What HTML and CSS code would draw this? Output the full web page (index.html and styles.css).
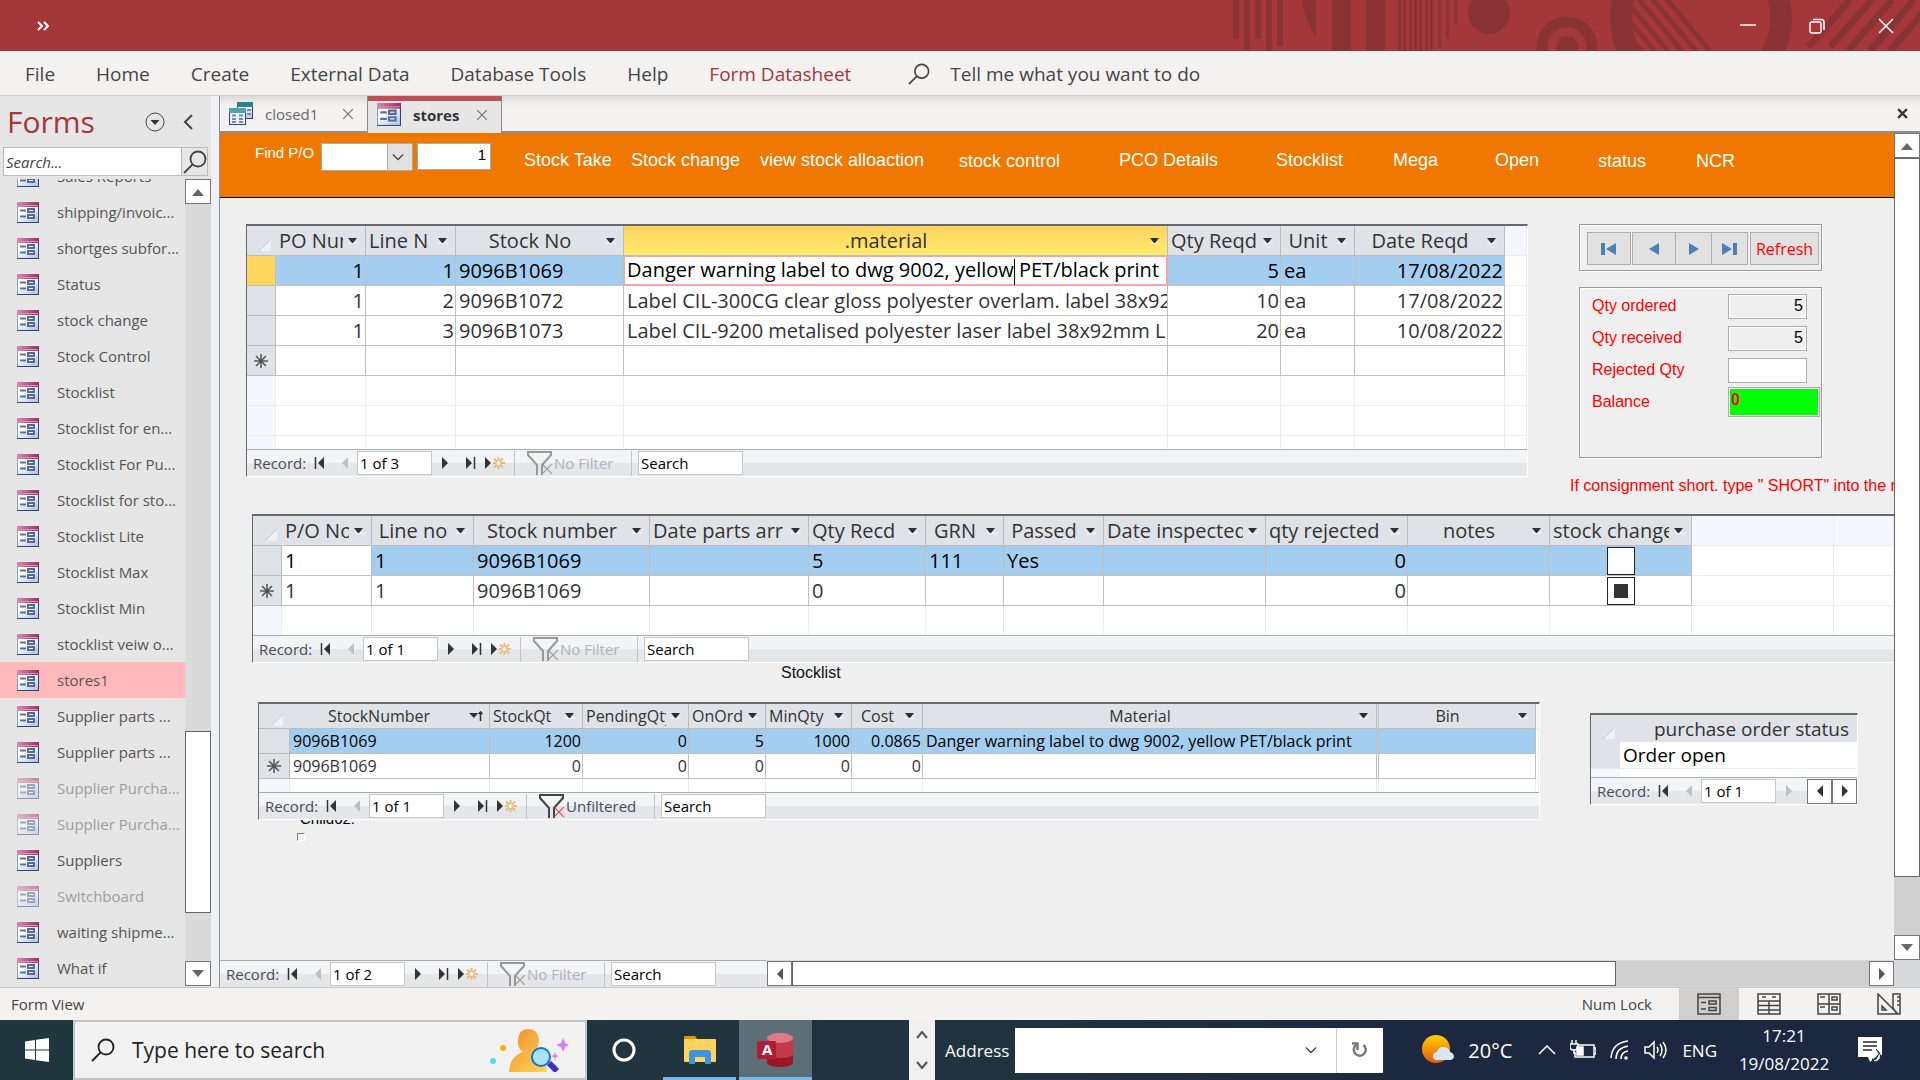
FILE: index.html
```html
<!DOCTYPE html>
<html lang="en">
<head>
    <meta charset="UTF-8">
    <title>stores</title>
    <link rel="stylesheet" href="styles.css">
</head>
<body>
    <!-- shared icons -->
    <svg class="sprite" aria-hidden="true">
        <defs>
            <linearGradient id="pink" x1="0" x2="1"><stop offset="0" stop-color="#d58bab"/><stop offset="1" stop-color="#9c2a60"/></linearGradient>
            <linearGradient id="sheet" x1="0" x2="1" y2="1"><stop offset="0.3" stop-color="#fff"/><stop offset="1" stop-color="#a9c0e6"/></linearGradient>
            <linearGradient id="amber" x1="0" x2="0" y2="1"><stop offset="0" stop-color="#ffd000"/><stop offset="1" stop-color="#e8590c"/></linearGradient>
            <linearGradient id="person" x1="0" x2="1" y2="1"><stop offset="0" stop-color="#f08c2a"/><stop offset="1" stop-color="#ffd75a"/></linearGradient>
        </defs>
        <symbol id="i-form" viewBox="0 0 22 21">
            <rect width="22" height="21" fill="#31456f"/>
            <rect width="21" height="20" fill="#8fa0bd"/>
            <rect x="1" y="5" width="20" height="15" fill="url(#sheet)"/>
            <rect width="22" height="5" fill="url(#pink)"/>
            <path d="M1 3.500h20" stroke="#d98fb0"/>
            <path d="M3 8.500h6M3 14.500h6" stroke="#5a6f9c" stroke-width="2"/>
            <path d="M11 7h6v3h-6zM11 13h6v3h-6z" fill="#fff" stroke="#566994" stroke-width="2"/>
        </symbol>
        <symbol id="i-query" viewBox="0 0 24 23">
            <rect x="8" y="0" width="16" height="17" fill="#31456f"/>
            <rect x="9" y="5" width="14" height="11" fill="url(#sheet)"/>
            <rect x="8" width="16" height="5" fill="#2c8088"/>
            <rect y="6" width="17" height="17" fill="#31456f"/>
            <rect x="1" y="11" width="15" height="11" fill="#eef3fb"/>
            <rect y="6" width="17" height="5" fill="#4da5ab"/>
            <path d="M3 13.500h4M3 17h4M3 20h4M10 13.500h4M10 17h4M10 20h4M18 8h4M18 12h4" stroke="#7288b5" stroke-width="2"/>
        </symbol>
        <symbol id="i-first" viewBox="0 0 14 14"><path d="M2.500 1v12" stroke="#333" stroke-width="1.500"/><path d="M11 1v12L5 7z" fill="#333"/></symbol>
        <symbol id="i-prev" viewBox="0 0 14 14"><path d="M10 1v12L4 7z"/></symbol>
        <symbol id="i-next" viewBox="0 0 14 14"><path d="M4 1v12l6-6z"/></symbol>
        <symbol id="i-last" viewBox="0 0 14 14"><path d="M11.500 1v12" stroke="#333" stroke-width="1.500"/><path d="M3 1v12l6-6z" fill="#333"/></symbol>
        <symbol id="i-new" viewBox="0 0 20 14"><path d="M0 1v12l6-6z" fill="#333"/><path d="M13.500 1v12M8 7h12M9 2.500l9 9M18 2.500l-9 9" stroke="#e8bd78" stroke-width="2"/><circle cx="13.500" cy="7" r="2" fill="#f6f6f8"/></symbol>
        <symbol id="i-filter" viewBox="0 0 26 24"><path d="M15 24V14L24 4V1H1v3l9 10v10" fill="none" stroke="currentColor" stroke-width="2"/></symbol>
        <symbol id="i-cross" viewBox="0 0 10 10"><path d="M1 1l8 8M9 1L1 9" stroke="currentColor" fill="none"/></symbol>
        <symbol id="i-drop" viewBox="0 0 12 8"><path d="M1 6h10" stroke="#fff"/><path d="M1 1h9L6 6H5z" fill="#29303a"/></symbol>
        <symbol id="i-corner" viewBox="0 0 12 12"><path d="M12 0v12H0z" fill="#edf1f6"/><path d="M12 0L0 12" stroke="#b9cbe0"/></symbol>
        <symbol id="i-star" viewBox="0 0 16 16"><path d="M8 1v14M1 8h14M3 3l10 10M13 3L3 13" stroke="#555" stroke-width="1.500"/></symbol>
        <symbol id="i-chev" viewBox="0 0 14 8"><path d="M1 1l6 6 6-6" fill="none" stroke="currentColor" stroke-width="1.500"/></symbol>
        <symbol id="i-glass" viewBox="0 0 24 24"><circle cx="15" cy="9" r="7.500" fill="none" stroke="currentColor" stroke-width="1.800"/><path d="M9.500 14.500L1 23" stroke="currentColor" stroke-width="1.800"/></symbol>
        <symbol id="i-up" viewBox="0 0 12 8"><path d="M0 8l6-7 6 7z"/></symbol>
        <symbol id="i-down" viewBox="0 0 12 8"><path d="M0 0l6 7 6-7z"/></symbol>
    </svg>

    <header class="titlebar">
        <svg class="titlebar-art" width="687" height="51" viewBox="1233 0 687 51">
            <g fill="#8a3335">
                <path d="M1233 0h6v39h-6zM1244 0h6v50h-6zM1255 0h6v39h-6zM1266 0h6v51h-6zM1277 0h6v46h-6z"/>
                <path d="M1302 0h14v37q-12-17-14-37zM1332 0h19v51h-19zM1366 0h19v51h-19z"/>
                <path d="M1398 0h3v51h-3zM1403 0h3v51h-3zM1409 0h3v51h-3zM1414 0h3v51h-3zM1419 0h3v51h-3zM1425 0h3v51h-3zM1430 0h3v51h-3zM1438 0h3v48h-3zM1446 0h3v38h-3zM1454 0h3v24h-3z"/>
                <circle cx="1489" cy="13" r="21"/>
                <circle cx="1567" cy="47" r="11"/>
            </g>
            <g fill="none" stroke="#8a3335">
                <circle cx="1567" cy="47" r="25" stroke-width="11"/>
                <circle cx="1701" cy="17" r="80" stroke-width="22"/>
                <path d="M1632 8l36 43M1632 24l23 27M1632 40l10 11M1636-4l46 55M1650-4l46 55M1664-4l46 55" stroke-width="5"/>
                <path d="M1808 47l42-47M1830 47l42-47M1848 51l44-51M1870 51l44-51M1890 51l44-51" stroke-width="7"/>
            </g>
        </svg>
        <button class="more" aria-label="More commands"><svg width="12" height="10" viewBox="0 0 12 10"><path d="M1 1l4 4-4 4M7 1l4 4-4 4" fill="none" stroke="#fff" stroke-width="2"/></svg></button>
        <div class="window-buttons">
            <button aria-label="Minimise"><svg width="16" height="16" viewBox="0 0 16 16"><path d="M0 7h16" stroke="#fff" stroke-width="1.500"/></svg></button>
            <button aria-label="Restore"><svg width="16" height="16" viewBox="0 0 16 16"><rect x="1" y="4" width="11" height="11" rx="2" fill="none" stroke="#fff" stroke-width="1.500"/><path d="M4 1.500h8q3 0 3 3V12" fill="none" stroke="#fff" stroke-width="1.500"/></svg></button>
            <button aria-label="Close"><svg width="16" height="16" viewBox="0 0 16 16"><path d="M1 1l14 14M15 1L1 15" stroke="#fff" stroke-width="1.500"/></svg></button>
        </div>
    </header>

    <nav class="ribbon">
        <a href="#">File</a>
        <a href="#">Home</a>
        <a href="#">Create</a>
        <a href="#">External Data</a>
        <a href="#">Database Tools</a>
        <a href="#">Help</a>
        <a href="#" class="current">Form Datasheet</a>
        <label class="tell-me">
            <svg width="22" height="22"><use href="#i-glass"/></svg>
            <input type="text" placeholder="Tell me what you want to do">
        </label>
    </nav>

    <div class="workspace">
        <aside class="nav-pane">
            <div class="nav-head">
                <h1>Forms</h1>
                <button aria-label="Choose group"><svg width="20" height="20" viewBox="0 0 20 20"><circle cx="10" cy="10" r="9" fill="none" stroke="#444"/><path d="M5.500 8h9L10 13z" fill="#333"/></svg></button>
                <button aria-label="Collapse pane"><svg width="10" height="16" viewBox="0 0 10 16"><path d="M9 1L2 8l7 7" fill="none" stroke="#444" stroke-width="2"/></svg></button>
            </div>
            <div class="nav-search">
                <input type="text" placeholder="Search..." aria-label="Search forms">
                <button aria-label="Search"><svg width="24" height="24"><use href="#i-glass"/></svg></button>
            </div>
            <div class="nav-body">
                <ul>
                    <li><a href="#"><svg><use href="#i-form"/></svg><span>Sales Reports</span></a></li>
                    <li><a href="#"><svg><use href="#i-form"/></svg><span>shipping/invoic...</span></a></li>
                    <li><a href="#"><svg><use href="#i-form"/></svg><span>shortges subfor...</span></a></li>
                    <li><a href="#"><svg><use href="#i-form"/></svg><span>Status</span></a></li>
                    <li><a href="#"><svg><use href="#i-form"/></svg><span>stock change</span></a></li>
                    <li><a href="#"><svg><use href="#i-form"/></svg><span>Stock Control</span></a></li>
                    <li><a href="#"><svg><use href="#i-form"/></svg><span>Stocklist</span></a></li>
                    <li><a href="#"><svg><use href="#i-form"/></svg><span>Stocklist for en...</span></a></li>
                    <li><a href="#"><svg><use href="#i-form"/></svg><span>Stocklist For Pu...</span></a></li>
                    <li><a href="#"><svg><use href="#i-form"/></svg><span>Stocklist for sto...</span></a></li>
                    <li><a href="#"><svg><use href="#i-form"/></svg><span>Stocklist Lite</span></a></li>
                    <li><a href="#"><svg><use href="#i-form"/></svg><span>Stocklist Max</span></a></li>
                    <li><a href="#"><svg><use href="#i-form"/></svg><span>Stocklist Min</span></a></li>
                    <li><a href="#"><svg><use href="#i-form"/></svg><span>stocklist veiw o...</span></a></li>
                    <li class="selected"><a href="#"><svg><use href="#i-form"/></svg><span>stores1</span></a></li>
                    <li><a href="#"><svg><use href="#i-form"/></svg><span>Supplier parts ...</span></a></li>
                    <li><a href="#"><svg><use href="#i-form"/></svg><span>Supplier parts ...</span></a></li>
                    <li class="dim"><a href="#"><svg><use href="#i-form"/></svg><span>Supplier Purcha...</span></a></li>
                    <li class="dim"><a href="#"><svg><use href="#i-form"/></svg><span>Supplier Purcha...</span></a></li>
                    <li><a href="#"><svg><use href="#i-form"/></svg><span>Suppliers</span></a></li>
                    <li class="dim"><a href="#"><svg><use href="#i-form"/></svg><span>Switchboard</span></a></li>
                    <li><a href="#"><svg><use href="#i-form"/></svg><span>waiting shipme...</span></a></li>
                    <li><a href="#"><svg><use href="#i-form"/></svg><span>What if</span></a></li>
                </ul>
                <div class="vscroll">
                    <button aria-label="Scroll up"><svg width="12" height="8"><use href="#i-up"/></svg></button>
                    <div class="track-before"></div>
                    <div class="thumb"></div>
                    <div class="track-after"></div>
                    <button aria-label="Scroll down"><svg width="12" height="8"><use href="#i-down"/></svg></button>
                </div>
            </div>
        </aside>

        <main class="document">
            <div class="tabs">
                <div class="tab"><svg width="24" height="23"><use href="#i-query"/></svg><a href="#">closed1</a><button aria-label="Close closed1"><svg width="12" height="12"><use href="#i-cross"/></svg></button></div>
                <div class="tab active"><svg width="24" height="23"><use href="#i-form"/></svg><a href="#">stores</a><button aria-label="Close stores"><svg width="12" height="12"><use href="#i-cross"/></svg></button></div>
                <button class="close-all" aria-label="Close form"><svg width="11" height="11" viewBox="0 0 10 10"><path d="M1 1l8 8M9 1L1 9" stroke="#333" stroke-width="2"/></svg></button>
            </div>

            <div class="form-area">
                <div class="form-view">
                    <div class="form-header">
                        <label class="find-label" for="find-po">Find P/O</label>
                        <div class="combo">
                            <select id="find-po"><option></option></select>
                            <svg width="12" height="8"><use href="#i-chev"/></svg>
                        </div>
                        <input class="po-value" type="text" value="1" aria-label="P/O number">
                        <div class="form-links">
                            <button>Stock Take</button>
                            <button>Stock change</button>
                            <button>view stock alloaction</button>
                            <button class="low">stock control</button>
                            <button>PCO Details</button>
                            <button>Stocklist</button>
                            <button>Mega</button>
                            <button>Open</button>
                            <button class="low">status</button>
                            <button class="low">NCR</button>
                        </div>
                    </div>

                    <div class="form-body">
                        <section class="row row-lines">
                            <div class="subform">
                                <table class="sheet lines">
                                    <colgroup><col class="w28"><col class="w90"><col class="w90"><col class="w168"><col><col class="w113"><col class="w74"><col class="w150"><col class="w22"></colgroup>
                                    <thead>
                                        <tr>
                                            <th><svg class="corner"><use href="#i-corner"/></svg></th>
                                            <th><div><span class="clip">PO Num</span><svg><use href="#i-drop"/></svg></div></th>
                                            <th><div><span class="clip">Line N</span><svg><use href="#i-drop"/></svg></div></th>
                                            <th><div><span>Stock No</span><svg><use href="#i-drop"/></svg></div></th>
                                            <th class="hot"><div><span>.material</span><svg><use href="#i-drop"/></svg></div></th>
                                            <th><div><span class="clip">Qty Reqd</span><svg><use href="#i-drop"/></svg></div></th>
                                            <th><div><span>Unit</span><svg><use href="#i-drop"/></svg></div></th>
                                            <th><div><span>Date Reqd</span><svg><use href="#i-drop"/></svg></div></th>
                                            <td class="void"></td>
                                        </tr>
                                    </thead>
                                    <tbody>
                                        <tr class="picked"><th class="hot-row"></th><td class="num">1</td><td class="num">1</td><td>9096B1069</td><td class="editing">Danger warning label to dwg 9002, yellow<i class="caret"></i> PET/black print</td><td class="num">5</td><td>ea</td><td class="num">17/08/2022</td><td class="void"></td></tr>
                                        <tr><th></th><td class="num">1</td><td class="num">2</td><td>9096B1072</td><td>Label CIL-300CG clear gloss polyester overlam. label 38x92mm</td><td class="num">10</td><td>ea</td><td class="num">17/08/2022</td><td class="void"></td></tr>
                                        <tr><th></th><td class="num">1</td><td class="num">3</td><td>9096B1073</td><td>Label CIL-9200 metalised polyester laser label 38x92mm L</td><td class="num">20</td><td>ea</td><td class="num">10/08/2022</td><td class="void"></td></tr>
                                        <tr><th><svg class="star"><use href="#i-star"/></svg></th><td></td><td></td><td></td><td></td><td></td><td></td><td></td><td class="void"></td></tr>
                                        <tr class="blank"><td></td><td></td><td></td><td></td><td></td><td></td><td></td><td></td><td></td></tr>
                                        <tr class="blank"><td></td><td></td><td></td><td></td><td></td><td></td><td></td><td></td><td></td></tr>
                                        <tr class="blank part"><td></td><td></td><td></td><td></td><td></td><td></td><td></td><td></td><td></td></tr>
                                    </tbody>
                                </table>
                                <div class="recnav">
                                    <span>Record:</span>
                                    <button aria-label="First"><svg><use href="#i-first"/></svg></button>
                                    <button aria-label="Previous" disabled><svg><use href="#i-prev"/></svg></button>
                                    <input class="position" type="text" value="1 of 3" aria-label="Current record">
                                    <button aria-label="Next"><svg><use href="#i-next"/></svg></button>
                                    <button aria-label="Last"><svg><use href="#i-last"/></svg></button>
                                    <button class="new" aria-label="New record"><svg><use href="#i-new"/></svg></button>
                                    <button class="filter" disabled><svg><use href="#i-filter"/></svg><svg class="x"><use href="#i-cross"/></svg>No Filter</button>
                                    <input class="find" type="text" value="Search" aria-label="Search records">
                                </div>
                            </div>

                            <div class="side">
                                <div class="box movers">
                                    <button aria-label="First order"><svg width="16" height="14" viewBox="0 0 16 14"><path d="M0 1h4v12H0zM15 1v12L5 7z"/></svg></button>
                                    <button aria-label="Previous order"><svg width="16" height="14" viewBox="0 0 16 14"><path d="M13 1v12L3 7z"/></svg></button>
                                    <button class="joined" aria-label="Next order"><svg width="16" height="14" viewBox="0 0 16 14"><path d="M3 1v12l10-6z"/></svg></button>
                                    <button class="joined" aria-label="Last order"><svg width="16" height="14" viewBox="0 0 16 14"><path d="M15 1h-4v12h4zM0 1v12l10-6z"/></svg></button>
                                    <button class="refresh">Refresh</button>
                                </div>
                                <div class="box totals">
                                    <label for="ordered">Qty ordered</label><input id="ordered" type="text" value="5" readonly>
                                    <label for="received">Qty received</label><input id="received" type="text" value="5" readonly>
                                    <label for="rejected">Rejected Qty</label><input id="rejected" class="open" type="text">
                                    <label for="balance">Balance</label><input id="balance" class="balance" type="text" value="0">
                                </div>
                                <p class="hint">If consignment short. type " SHORT" into the rejected box</p>
                            </div>
                        </section>

                        <section class="row row-receipts">
                            <div class="subform cut">
                                <table class="sheet">
                                    <colgroup><col class="w28"><col class="w90"><col class="w102"><col class="w176"><col class="w159"><col class="w117"><col class="w78"><col class="w100"><col class="w162"><col class="w142"><col class="w142"><col class="w142"><col class="w142"><col></colgroup>
                                    <thead>
                                        <tr>
                                            <th><svg class="corner"><use href="#i-corner"/></svg></th>
                                            <th><div><span class="clip">P/O No</span><svg><use href="#i-drop"/></svg></div></th>
                                            <th><div><span>Line no</span><svg><use href="#i-drop"/></svg></div></th>
                                            <th><div><span>Stock number</span><svg><use href="#i-drop"/></svg></div></th>
                                            <th><div><span class="clip">Date parts arr</span><svg><use href="#i-drop"/></svg></div></th>
                                            <th><div><span class="clip">Qty Recd</span><svg><use href="#i-drop"/></svg></div></th>
                                            <th><div><span>GRN</span><svg><use href="#i-drop"/></svg></div></th>
                                            <th><div><span>Passed</span><svg><use href="#i-drop"/></svg></div></th>
                                            <th><div><span class="clip">Date inspected</span><svg><use href="#i-drop"/></svg></div></th>
                                            <th><div><span class="clip">qty rejected</span><svg><use href="#i-drop"/></svg></div></th>
                                            <th><div><span>notes</span><svg><use href="#i-drop"/></svg></div></th>
                                            <th><div><span class="clip">stock change</span><svg><use href="#i-drop"/></svg></div></th>
                                            <td class="void"></td><td class="void"></td>
                                        </tr>
                                    </thead>
                                    <tbody>
                                        <tr class="picked"><th></th><td class="plain">1</td><td>1</td><td>9096B1069</td><td></td><td>5</td><td>111</td><td>Yes</td><td></td><td class="num">0</td><td></td><td class="mid"><input type="checkbox" aria-label="Stock changed"></td><td class="void"></td><td class="void"></td></tr>
                                        <tr><th><svg class="star"><use href="#i-star"/></svg></th><td>1</td><td>1</td><td>9096B1069</td><td></td><td>0</td><td></td><td></td><td></td><td class="num">0</td><td></td><td class="mid"><input type="checkbox" checked aria-label="Stock changed, new record"></td><td class="void"></td><td class="void"></td></tr>
                                        <tr class="blank last"><td></td><td></td><td></td><td></td><td></td><td></td><td></td><td></td><td></td><td></td><td></td><td></td><td></td><td></td></tr>
                                    </tbody>
                                </table>
                                <div class="recnav">
                                    <span>Record:</span>
                                    <button aria-label="First"><svg><use href="#i-first"/></svg></button>
                                    <button aria-label="Previous" disabled><svg><use href="#i-prev"/></svg></button>
                                    <input class="position" type="text" value="1 of 1" aria-label="Current record">
                                    <button aria-label="Next"><svg><use href="#i-next"/></svg></button>
                                    <button aria-label="Last"><svg><use href="#i-last"/></svg></button>
                                    <button class="new" aria-label="New record"><svg><use href="#i-new"/></svg></button>
                                    <button class="filter" disabled><svg><use href="#i-filter"/></svg><svg class="x"><use href="#i-cross"/></svg>No Filter</button>
                                    <input class="find" type="text" value="Search" aria-label="Search records">
                                </div>
                            </div>
                        </section>

                        <p class="caption">Stocklist</p>

                        <section class="row row-stock">
                            <div class="subform">
                                <table class="sheet small">
                                    <colgroup><col class="w30"><col class="w200"><col class="w93"><col class="w106"><col class="w77"><col class="w86"><col class="w71"><col><col class="w157"><col class="w3"></colgroup>
                                    <thead>
                                        <tr>
                                            <th><svg class="corner"><use href="#i-corner"/></svg></th>
                                            <th><div><span>StockNumber</span><svg class="sorted" viewBox="0 0 14 10"><path d="M0 2h9L5 7z" fill="#29303a"/><path d="M11.500 10V1M9.500 3l2-2 2 2" fill="none" stroke="#29303a" stroke-width="1.500"/></svg></div></th>
                                            <th><div><span class="clip">StockQt</span><svg><use href="#i-drop"/></svg></div></th>
                                            <th><div><span class="clip">PendingQty</span><svg><use href="#i-drop"/></svg></div></th>
                                            <th><div><span class="clip">OnOrd</span><svg><use href="#i-drop"/></svg></div></th>
                                            <th><div><span class="clip">MinQty</span><svg><use href="#i-drop"/></svg></div></th>
                                            <th><div><span>Cost</span><svg><use href="#i-drop"/></svg></div></th>
                                            <th class="double"><div><span>Material</span><svg><use href="#i-drop"/></svg></div></th>
                                            <th><div><span>Bin</span><svg><use href="#i-drop"/></svg></div></th>
                                            <td class="void"></td>
                                        </tr>
                                    </thead>
                                    <tbody>
                                        <tr class="picked"><th></th><td>9096B1069</td><td class="num">1200</td><td class="num">0</td><td class="num">5</td><td class="num">1000</td><td class="num">0.0865</td><td class="double">Danger warning label to dwg 9002, yellow PET/black print</td><td></td><td class="void"></td></tr>
                                        <tr><th><svg class="star"><use href="#i-star"/></svg></th><td>9096B1069</td><td class="num">0</td><td class="num">0</td><td class="num">0</td><td class="num">0</td><td class="num">0</td><td class="double"></td><td></td><td class="void"></td></tr>
                                        <tr class="blank part"><td></td><td></td><td></td><td></td><td></td><td></td><td></td><td class="double"></td><td></td><td></td></tr>
                                    </tbody>
                                </table>
                                <div class="recnav">
                                    <span>Record:</span>
                                    <button aria-label="First"><svg><use href="#i-first"/></svg></button>
                                    <button aria-label="Previous" disabled><svg><use href="#i-prev"/></svg></button>
                                    <input class="position" type="text" value="1 of 1" aria-label="Current record">
                                    <button aria-label="Next"><svg><use href="#i-next"/></svg></button>
                                    <button aria-label="Last"><svg><use href="#i-last"/></svg></button>
                                    <button class="new" aria-label="New record"><svg><use href="#i-new"/></svg></button>
                                    <button class="filter off"><svg><use href="#i-filter"/></svg><svg class="x"><use href="#i-cross"/></svg>Unfiltered</button>
                                    <input class="find" type="text" value="Search" aria-label="Search records">
                                </div>
                            </div>

                            <div class="subform status-form">
                                <table class="sheet status">
                                    <colgroup><col class="w28"><col></colgroup>
                                    <thead><tr><th><svg class="corner"><use href="#i-corner"/></svg></th><th>purchase order status</th></tr></thead>
                                    <tbody>
                                        <tr><th></th><td>Order open</td></tr>
                                        <tr class="blank part"><td></td><td></td></tr>
                                    </tbody>
                                </table>
                                <div class="recnav">
                                    <span>Record:</span>
                                    <button aria-label="First"><svg><use href="#i-first"/></svg></button>
                                    <button aria-label="Previous" disabled><svg><use href="#i-prev"/></svg></button>
                                    <input class="position" type="text" value="1 of 1" aria-label="Current record">
                                    <button aria-label="Next" disabled><svg><use href="#i-next"/></svg></button>
                                    <div class="mini-scroll">
                                        <button aria-label="Scroll left"><svg><use href="#i-prev"/></svg></button>
                                        <button aria-label="Scroll right"><svg><use href="#i-next"/></svg></button>
                                    </div>
                                </div>
                            </div>
                        </section>

                        <div class="child"><span>Child62:</span></div>
                        <div class="child-frame"></div>
                    </div>
                </div>
                <div class="vscroll form-scroll">
                    <button aria-label="Scroll up"><svg width="12" height="8"><use href="#i-up"/></svg></button>
                    <div class="thumb"></div>
                    <div class="track-after"></div>
                    <button aria-label="Scroll down"><svg width="12" height="8"><use href="#i-down"/></svg></button>
                </div>
            </div>

            <div class="form-foot">
                <div class="recnav">
                    <span>Record:</span>
                    <button aria-label="First"><svg><use href="#i-first"/></svg></button>
                    <button aria-label="Previous" disabled><svg><use href="#i-prev"/></svg></button>
                    <input class="position" type="text" value="1 of 2" aria-label="Current record">
                    <button aria-label="Next"><svg><use href="#i-next"/></svg></button>
                    <button aria-label="Last"><svg><use href="#i-last"/></svg></button>
                    <button class="new" aria-label="New record"><svg><use href="#i-new"/></svg></button>
                    <button class="filter" disabled><svg><use href="#i-filter"/></svg><svg class="x"><use href="#i-cross"/></svg>No Filter</button>
                    <input class="find" type="text" value="Search" aria-label="Search records">
                </div>
                <div class="hscroll">
                    <button aria-label="Scroll left"><svg width="14" height="14"><use href="#i-prev"/></svg></button>
                    <div class="thumb"></div>
                    <div class="track-after"></div>
                    <button aria-label="Scroll right"><svg width="14" height="14"><use href="#i-next"/></svg></button>
                </div>
            </div>
        </main>
    </div>

    <footer class="statusbar">
        <span>Form View</span>
        <span class="numlock">Num Lock</span>
        <button class="on" aria-label="Form view"><svg width="24" height="22" viewBox="0 0 24 22"><path d="M1 1h22v20H1zM1 4.500h22M4 9.500h5M4 16h5"/><path d="M12 8h7v3h-7zM12 14.500h7v3h-7z"/></svg></button>
        <button aria-label="Datasheet view"><svg width="24" height="22" viewBox="0 0 24 22"><path d="M1 1h22v20H1zM1 8h22M1 12.500h22M1 17h22M12 8v13M5 4h4M15 4h4"/></svg></button>
        <button aria-label="Layout view"><svg width="24" height="22" viewBox="0 0 24 22"><path d="M1 1h22v20H1zM12 1v20M1 11h22M3 4h5M3 14h5M15 4h5v3h-5zM15 14h5v3h-5z"/></svg></button>
        <button aria-label="Design view"><svg width="24" height="22" viewBox="0 0 24 22"><path d="M1 1v20h20zM5 13v4h4zM16 1h7v20h-3L16 15zM20 4h3M20 8h3M20 12h3"/></svg></button>
    </footer>

    <div class="taskbar">
        <button class="start" aria-label="Start"><svg width="24" height="24" viewBox="0 0 24 24"><path fill="#fff" d="M0 3.500l10-1.500v9.500H0zM11 1.800L24 0v11.500H11zM0 12.500h10V22L0 20.500zM11 12.500h13V24l-13-1.800z"/></svg></button>
        <label class="task-search">
            <svg width="24" height="24"><use href="#i-glass"/></svg>
            <input type="text" placeholder="Type here to search">
            <svg width="80" height="44" viewBox="0 0 80 44">
                <circle cx="4" cy="33" r="3" fill="#67d6e8"/><circle cx="14" cy="20" r="3" fill="#ffb000"/>
                <path d="M20 44q1-16 14-20-6-4-5-12 1-11 10-11 10 0 11 11 0 7-5 12 12 4 13 20z" fill="url(#person)"/>
                <path d="M60 35l8 8" stroke="#3a32c8" stroke-width="6"/>
                <circle cx="52" cy="29" r="9" fill="#a5e3f5" stroke="#1c6fd0" stroke-width="2"/>
                <path d="M74 10l2 5 4 2-4 2-2 5-2-5-5-2 5-2zM66 24l1 3 3 1-3 1-1 3-1-3-3-1 3-1z" fill="#d97bf0"/>
            </svg>
        </label>
        <button class="app" aria-label="Cortana"><svg width="26" height="26" viewBox="0 0 26 26"><circle cx="13" cy="13" r="10" fill="none" stroke="#fff" stroke-width="3"/></svg></button>
        <button class="app running" aria-label="File Explorer"><svg width="34" height="30" viewBox="0 0 34 30"><path d="M1 5V2q0-1 1-1h10l3 4z" fill="#d99a00"/><rect x="1" y="4" width="32" height="23" rx="1" fill="#ffd35c"/><path d="M6 29V18q0-3 3-3h16q3 0 3 3v11h-6v-7H12v7z" fill="#3c96dd"/></svg></button>
        <button class="app running focused" aria-label="Access"><svg width="38" height="36" viewBox="0 0 38 36">
            <path d="M10 6h26v24q0 5-13 5t-13-5z" fill="#9c1626"/><path d="M10 6h26v17q-4 3-13 3t-13-3z" fill="#c33a4b"/><ellipse cx="23" cy="6" rx="13" ry="5" fill="#e07886"/>
            <rect y="9" width="19" height="18" rx="2" fill="#b01e33"/><text x="5" y="23" class="app-letter">A</text></svg></button>
        <div class="tray-scroll">
            <button aria-label="Previous"><svg width="12" height="8" viewBox="0 0 12 8"><path d="M1 7l5-6 5 6" fill="none" stroke="#555" stroke-width="2"/></svg></button>
            <button aria-label="Next"><svg width="12" height="8" viewBox="0 0 12 8"><path d="M1 1l5 6 5-6" fill="none" stroke="#555" stroke-width="2"/></svg></button>
        </div>
        <label class="address-label" for="address">Address</label>
        <div class="address">
            <input id="address" type="text">
            <button aria-label="Show history"><svg width="12" height="8"><use href="#i-chev"/></svg></button>
            <button class="reload" aria-label="Reload"><svg width="18" height="18" viewBox="0 0 18 18"><path d="M12.500 4a6 6 0 1 1-7.500 0" fill="none" stroke="#777" stroke-width="2.500"/><path d="M1 2.500h5.500V9" fill="none" stroke="#777" stroke-width="2.500"/></svg></button>
        </div>
        <a class="weather" href="#">
            <svg width="34" height="32" viewBox="0 0 34 32"><circle cx="15" cy="15" r="14" fill="url(#amber)"/><path d="M16 26q-5 0-4-5 1-3 4-3 2-6 8-5 4 1 5 5 4 1 4 5-1 3-4 3z" fill="#dbe6f5"/></svg>
            <span>20°C</span>
        </a>
        <div class="tray">
            <button aria-label="Show hidden icons"><svg width="18" height="10" viewBox="0 0 18 10"><path d="M1 9l8-8 8 8"/></svg></button>
            <button aria-label="Battery"><svg width="26" height="20" viewBox="0 0 26 20"><path d="M8 5h16v12H5v-5M24 8h2v6h-2M2 0v4M6 0v4M0 4h8v3q0 3-4 3t-4-3zM4 10v4"/><path d="M7 7h6v8H7z" fill="#fff"/></svg></button>
            <button aria-label="Network"><svg width="20" height="20" viewBox="0 0 20 20"><path d="M1 18Q2 3 18 1M6 19Q6 8 18 6M11 19q0-7 7-8"/><circle cx="16" cy="18" r="1"/></svg></button>
            <button aria-label="Volume"><svg width="24" height="20" viewBox="0 0 24 20"><path d="M1 7h4l5-5v16l-5-5H1zM13 7q2 3 0 6M16 4q4 6 0 12M19 2q6 8 0 16"/></svg></button>
            <button class="lang">ENG</button>
        </div>
        <button class="clock"><span>17:21</span><span>19/08/2022</span></button>
        <button class="notes" aria-label="Notifications"><svg width="26" height="26" viewBox="0 0 26 26"><path d="M0 0h24v18h-4l-8 7-2-5H0z" fill="#fff"/><path d="M5 5h14M5 9h14M5 13h9" stroke="#1b2840" stroke-width="1.500"/><path d="M18 12q5 4 0 10-2 1-4 0 2 4 6 2 6-5-2-12z" fill="#fff" stroke="#1b2840"/></svg></button>
    </div>
</body>
</html>
```
FILE: styles.css
```css
:root {
    --ui: "Segoe UI", "Open Sans", "Noto Sans", sans-serif;
    --sheet: "Comic Sans MS", "Open Sans", "Noto Sans", sans-serif;
    --plain: "Liberation Sans", Arial, sans-serif;
    --head: #dfe2e6;
    --pick: #a4cef0;
    --line: #c0c0c0;
    --form: #efefef;
}
* {
    box-sizing: border-box;
}
body {
    margin: 0;
    height: 100vh;
    display: flex;
    flex-direction: column;
    overflow: hidden;
    font-family: var(--ui);
    font-size: 15px;
    color: #444;
    background: #f3f2f1;
}
button {
    font: inherit;
    color: inherit;
    background: none;
    border: 0;
    padding: 0;
    display: flex;
    align-items: center;
    justify-content: center;
}
input, select {
    font: inherit;
    color: inherit;
    border: 0;
    padding: 0;
    margin: 0;
    min-width: 0;
    border-radius: 0;
    outline: 0;
}
a {
    color: inherit;
    text-decoration: none;
}
p, h1, ul {
    margin: 0;
    padding: 0;
}
svg {
    flex: none;
    display: block;
}
.sprite {
    position: absolute;
    width: 0;
    height: 0;
}

/* title bar and ribbon */
.titlebar {
    position: relative;
    height: 51px;
    flex: none;
    display: flex;
    align-items: center;
    justify-content: space-between;
    background: #a4373a;
}
.titlebar-art {
    position: absolute;
    top: 0;
    right: 0;
}
.more {
    margin-left: 37px;
}
.window-buttons {
    position: relative;
    display: flex;
}
.window-buttons button {
    width: 69px;
    height: 51px;
}
.ribbon {
    height: 45px;
    flex: none;
    display: flex;
    align-items: center;
    gap: 41px;
    padding: 2px 0 0 25px;
    font-size: 19px;
    border-bottom: 1px solid #cfcdcb;
}
.ribbon .current {
    color: #a4373a;
}
.tell-me {
    flex: 1;
    display: flex;
    align-items: center;
    gap: 20px;
    margin-left: 16px;
}
.tell-me input {
    flex: 1;
    background: none;
}
input::placeholder {
    color: inherit;
    opacity: 1;
}

/* navigation pane */
.workspace {
    flex: 1;
    min-height: 0;
    display: flex;
}
.nav-pane {
    width: 219px;
    flex: none;
    display: flex;
    flex-direction: column;
    background: #e6e6e6;
    border-right: 8px solid #eff1f4;
}
.nav-head {
    height: 51px;
    display: flex;
    align-items: center;
    padding-left: 7px;
}
.nav-head h1 {
    flex: 1;
    font-size: 30px;
    font-weight: 400;
    color: #a4373a;
}
.nav-head button {
    margin-right: 18px;
    height: 28px;
}
.nav-search {
    height: 29px;
    display: flex;
    margin: 0 3px;
    border: 1px solid #bbb;
}
.nav-search input {
    flex: 1;
    padding-left: 2px;
    font-style: italic;
    background: #fff;
}
.nav-search button {
    width: 26px;
    border-left: 1px solid #bbb;
}
.nav-body {
    flex: 1;
    min-height: 0;
    display: flex;
    margin-top: 3px;
    padding-bottom: 1px;
}
.nav-body ul {
    flex: 1;
    min-width: 0;
    list-style: none;
    display: flex;
    flex-direction: column;
    justify-content: flex-end;
    overflow: hidden;
}
.nav-body li a {
    height: 36px;
    display: flex;
    align-items: center;
    gap: 18px;
    padding-left: 17px;
    color: #555;
    white-space: nowrap;
}
.nav-body li svg {
    width: 22px;
    height: 21px;
}
.nav-body .selected {
    background: #ffb9bb;
}
.nav-body .dim {
    opacity: 0.5;
}

/* scroll bars */
.vscroll {
    width: 26px;
    flex: none;
    display: flex;
    flex-direction: column;
    background: #dadada;
}
.vscroll button {
    height: 25px;
    flex: none;
    background: #fff;
    border: 1px solid #777;
    fill: #666;
}
.vscroll .thumb,
.hscroll .thumb {
    background: #fff;
    border: 1px solid #666;
}
.nav-body .track-before {
    flex: 528;
}
.nav-body .thumb {
    flex: 180;
}
.nav-body .track-after {
    flex: 48;
}

/* document area */
.document {
    flex: 1;
    min-width: 0;
    display: flex;
    flex-direction: column;
    border-left: 1px solid #8a8f99;
}
.tabs {
    height: 37px;
    flex: none;
    display: flex;
    border-bottom: 2px solid #8d8d93;
    background: linear-gradient(#dddcdb, #f3f2f1 10px);
}
.tab {
    display: flex;
    align-items: center;
    width: 148px;
    padding: 0 13px 0 9px;
    color: #666;
    font-size: 15px;
    border-right: 1px solid #8d8d93;
}
.tab a {
    flex: 1;
    padding-left: 12px;
}
.tab button {
    color: #777;
}
.tab.active {
    width: 134px;
    height: 37px;
    padding-bottom: 5px;
    background: #e6e6e6;
    border-top: 5px solid #bf4f54;
    font-weight: 700;
    color: #333;
}
.close-all {
    margin-left: auto;
    margin-right: 12px;
}
.form-area {
    flex: 1;
    min-height: 0;
    display: flex;
}
.form-view {
    flex: 1;
    min-width: 0;
    overflow: hidden;
    background: var(--form);
}
.form-header {
    height: 65px;
    display: flex;
    align-items: flex-start;
    padding: 10px 0 0 35px;
    background: #f07800;
    border-bottom: 1px solid #000;
    font-family: var(--plain);
}
.find-label {
    width: 66px;
    font-size: 15px;
    line-height: 20px;
    color: #fff;
}
.combo {
    position: relative;
    width: 92px;
    height: 28px;
    border: 1px solid #aaa;
}
.combo select {
    width: 100%;
    height: 100%;
    appearance: none;
    background: linear-gradient(90deg, #fff 65px, #aaa 65px, #aaa 66px, #e1e1e1 66px);
}
.combo svg {
    position: absolute;
    right: 8px;
    top: 9px;
}
.po-value {
    width: 74px;
    height: 27px;
    margin-left: 4px;
    padding: 0 4px 4px;
    border: 1px solid #aaa;
    background: #fff;
    color: #000;
    text-align: right;
}
.form-links {
    flex: 1;
    display: grid;
    grid-template-columns: 107fr 129fr 199fr 160fr 157fr 117fr 102fr 103fr 98fr 198fr;
    padding: 5px 0 0 33px;
    color: #fff;
    font-size: 18px;
}
.form-links button {
    height: 24px;
    justify-content: flex-start;
    white-space: nowrap;
}
.form-links .low {
    height: 27px;
}
.form-body {
    padding-top: 26px;
}
.row {
    display: flex;
    align-items: flex-start;
}
.row-lines {
    padding-left: 26px;
    gap: 42px;
}
.row-receipts {
    padding-left: 32px;
    margin-top: 18px;
}
.row-stock {
    padding: 0 36px 0 38px;
    gap: 50px;
    margin-top: 19px;
}
.caption {
    height: 20px;
    padding-left: 561px;
    font: 16px/20px var(--plain);
    color: #111;
}

/* subforms */
.subform {
    flex: 1;
    min-width: 0;
    border: 1px solid #fff;
    border-top: 2px solid #696969;
    border-left-color: #696969;
    background: #fff;
}
.subform.cut {
    border-right: 0;
}
.sheet {
    width: 100%;
    table-layout: fixed;
    border-spacing: 0;
    font-family: var(--sheet);
    font-size: 20px;
    line-height: 28px;
    color: #333;
}
.w3 { width: 3px; }
.w22 { width: 22px; }
.w28 { width: 29px; }
.w30 { width: 31px; }
.w71 { width: 71px; }
.w74 { width: 74px; }
.w77 { width: 77px; }
.w78 { width: 78px; }
.w86 { width: 86px; }
.w90 { width: 90px; }
.w93 { width: 93px; }
.w100 { width: 100px; }
.w102 { width: 102px; }
.w106 { width: 106px; }
.w113 { width: 113px; }
.w117 { width: 117px; }
.w142 { width: 142px; }
.w150 { width: 150px; }
.w157 { width: 157px; }
.w159 { width: 159px; }
.w162 { width: 162px; }
.w168 { width: 168px; }
.w176 { width: 176px; }
.w200 { width: 200px; }
.sheet th,
.sheet td {
    height: 30px;
    padding: 0 3px;
    font-weight: 400;
    text-align: left;
    white-space: nowrap;
    overflow: hidden;
    border-right: 1px solid var(--line);
    border-bottom: 1px solid var(--line);
}
.sheet th {
    background: var(--head);
    border-color: #b9bcc0;
}
.sheet th div {
    display: flex;
    align-items: center;
}
.sheet th span {
    flex: 1;
    min-width: 0;
    overflow: hidden;
    text-align: center;
}
.sheet th .clip {
    text-align: left;
}
.sheet th div svg {
    width: 12px;
    height: 8px;
    margin: 0 3px 0 4px;
}
.sheet th .sorted {
    width: 14px;
    height: 10px;
}
.sheet .corner {
    width: 12px;
    height: 12px;
    margin: 8px 0 0 9px;
}
.sheet .star {
    width: 16px;
    height: 16px;
    margin: 0 auto;
}
.sheet thead th:first-child {
    border-right-color: var(--head);
}
.sheet .hot {
    background: linear-gradient(#ffd25f, #ffec6c);
}
.sheet .hot-row {
    background: #ffd75e;
}
.sheet .picked td {
    background: var(--pick);
    color: #000;
}
.sheet .picked .plain {
    background: #fff;
}
.sheet .picked .editing {
    background: #fff;
    box-shadow: inset 0 0 0 1px #f7a3a8;
    border-color: #f7a3a8;
}
.caret {
    display: inline-block;
    width: 1px;
    height: 26px;
    margin-right: -1px;
    background: #000;
    vertical-align: middle;
}
.sheet .num {
    padding-right: 1px;
    text-align: right;
}
.sheet .mid {
    text-align: center;
}
.sheet .blank td,
.sheet .void,
.sheet .picked .void {
    background: #fff;
    border-color: #ececec;
}
.sheet .blank td:first-child,
.sheet thead .void {
    background: #f6f6fe;
}
.sheet .last td {
    height: 29px;
    border-bottom: 0;
}
.sheet .part td {
    height: 13px;
    border-bottom: 0;
}
.sheet .double {
    border-right: 3px double var(--line);
}
.sheet input[type="checkbox"] {
    appearance: none;
    display: block;
    width: 28px;
    height: 28px;
    margin: 0 auto;
    border: 1px solid #222;
    background: #fff;
}
.sheet input[type="checkbox"]:checked {
    background: #333;
    background-clip: content-box;
    padding: 6px;
    box-shadow: inset 0 0 0 6px #fff;
}
.small {
    font-size: 16px;
    line-height: 24px;
}
.small th,
.small td {
    height: 25px;
}
.status {
    font-size: 19px;
    line-height: 26px;
}
.status th,
.status td {
    height: 27px;
    border-right: 0;
    border-color: #ececec;
    color: #000;
}
.status thead th {
    border-bottom: 0;
    padding-left: 34px;
    line-height: 24px;
    color: #333;
}
.status thead th:first-child {
    padding-left: 3px;
}
.status .part td {
    height: 8px;
}
.status-form {
    flex: none;
    width: 268px;
    margin-top: 11px;
}

/* record navigation */
.recnav {
    height: 27px;
    display: flex;
    align-items: center;
    padding-left: 6px;
    font-size: 15px;
    color: #444c5a;
    border-top: 1px solid #a9adb8;
    background: linear-gradient(#f3f4f6 50%, #e4e6ea 50%);
}
.recnav span {
    width: 54px;
}
.recnav button {
    width: 25px;
    height: 25px;
    fill: #333;
}
.recnav button svg {
    width: 14px;
    height: 14px;
}
.recnav button:disabled {
    color: #b3b3b8;
    fill: #c0c0c4;
}
.recnav input {
    height: 24px;
    padding: 0 2px;
    border: 1px solid #c4c6cc;
    background: #fff;
    color: #000;
}
.recnav .position {
    width: 75px;
}
.recnav .new {
    width: 26px;
}
.recnav .new svg {
    width: 20px;
}
.recnav .filter {
    width: 118px;
    margin-left: 6px;
    padding-left: 12px;
    justify-content: flex-start;
    border: 1px solid #c0c3ca;
    border-width: 0 1px;
    font-size: 15px;
}
.recnav .filter svg {
    width: 26px;
    height: 24px;
    color: #999;
}
.recnav .filter .x {
    width: 12px;
    height: 12px;
    margin: 12px 1px 0 -12px;
}
.recnav .filter.off {
    width: 129px;
}
.recnav .filter.off svg {
    color: #444;
}
.recnav .filter.off .x {
    color: #e84a4a;
}
.recnav .find {
    width: 105px;
    margin-left: 6px;
}
.mini-scroll {
    display: flex;
    margin-left: auto;
}
.mini-scroll button {
    border: 1px solid #777;
    background: #fff;
}

/* order summary */
.side {
    width: 324px;
    padding-left: 9px;
    font-family: var(--plain);
    color: #f00;
}
.box {
    width: 243px;
    border: 1px solid #9a9a9a;
    box-shadow: 1px 1px #fff, inset 1px 1px #fff;
}
.movers {
    display: flex;
    height: 47px;
    padding: 7px 2px 0 7px;
    fill: #4a80b8;
}
.movers button {
    width: 44px;
    height: 33px;
    margin-right: 1px;
    border: 1px solid #adadad;
    background: #e1e1e1;
}
.movers .joined {
    width: 37px;
    margin-left: -2px;
}
.movers .refresh {
    width: 69px;
    margin: 0 0 0 auto;
    font: 16px "Open Sans", sans-serif;
}
.totals {
    display: grid;
    grid-template-columns: 136px 1fr;
    grid-auto-rows: 32px;
    height: 171px;
    margin-top: 16px;
    padding: 2px 2px 0 12px;
    align-items: center;
    font-size: 16px;
}
.totals input {
    width: 79px;
    height: 25px;
    padding: 0 3px;
    border: 1px solid #adadad;
    box-shadow: inset 0 0 0 1px #fff;
    background: var(--form);
    color: #000;
    text-align: right;
}
.totals .open {
    background: #fff;
}
.totals .balance {
    width: 92px;
    height: 30px;
    padding: 0 2px 4px;
    background: #0f0;
    color: #f00;
    font-weight: 700;
    text-align: left;
}
.hint {
    margin: 18px 0 0 -9px;
    font-size: 16px;
    line-height: 20px;
    white-space: nowrap;
    overflow: hidden;
}
.child {
    height: 8px;
    display: flex;
    align-items: flex-end;
    overflow: hidden;
    padding-left: 80px;
    font: 15px/18px var(--plain);
    color: #000;
}
.child-frame {
    width: 8px;
    height: 8px;
    margin: 5px 0 0 77px;
    border: 1px solid #fff;
    border-top-color: #777;
    border-left-color: #777;
}

.form-scroll {
    background: #cfcfcf;
}
.form-scroll .thumb {
    flex: 722;
}
.form-scroll .track-after {
    flex: 58;
}
.form-foot {
    height: 27px;
    flex: none;
    display: flex;
    background: #d8d9dc;
    padding-right: 26px;
}
.form-foot .recnav {
    width: 547px;
}
.hscroll {
    flex: 1;
    display: flex;
    margin: 1px 0;
    background: #cfcfcf;
}
.hscroll button {
    width: 25px;
    background: #fff;
    border: 1px solid #777;
    fill: #555;
}
.hscroll .thumb {
    flex: 824;
}
.hscroll .track-after {
    flex: 253;
}

.statusbar {
    height: 33px;
    flex: none;
    display: flex;
    align-items: center;
    padding: 0 1px 0 11px;
    font-size: 15px;
    border-top: 1px solid #c6c6c6;
}
.numlock {
    margin: 0 27px 0 auto;
}
.statusbar button {
    width: 60px;
    height: 32px;
}
.statusbar .on {
    background: #d0cfce;
}
.statusbar svg {
    fill: none;
    stroke: #444;
    stroke-width: 1.5;
}

/* taskbar */
.taskbar {
    height: 60px;
    flex: none;
    display: flex;
    align-items: center;
    background: linear-gradient(90deg, #20363d, #20343f 50%, #1b2840 75%);
    color: #fff;
    border-right: 8px solid #1b2840;
}
.start {
    width: 73px;
    height: 60px;
}
.task-search {
    width: 514px;
    height: 60px;
    display: flex;
    align-items: center;
    gap: 17px;
    padding: 0 16px;
    border: 2px solid #c5c5c5;
    background: #f2f2f2;
    color: #222;
    font-size: 21px;
}
.task-search input {
    flex: 1;
    background: none;
}
.app {
    width: 73px;
    height: 60px;
    margin-right: 3px;
}
.running {
    border-top: 3px solid transparent;
    border-bottom: 3px solid #76b9ed;
}
.focused {
    background: #5e6e76;
    border-top-color: #5e6e76;
    margin-right: 0;
}
.app-letter {
    font: 700 15px var(--ui);
    fill: #fff;
}
.tray-scroll {
    display: flex;
    flex-direction: column;
    width: 26px;
    height: 60px;
    margin-left: auto;
    background: #f0f0f0;
}
.tray-scroll button {
    flex: 1;
}
.address-label {
    padding: 0 6px 0 10px;
    font-size: 17px;
}
.address {
    display: flex;
    width: 368px;
    height: 45px;
    background: #fff;
    color: #444;
}
.address input {
    flex: 1;
    background: none;
}
.address button {
    width: 50px;
}
.address .reload {
    width: 47px;
    border-left: 1px solid #ccc;
}
.weather {
    display: flex;
    align-items: center;
    gap: 13px;
    margin-left: 38px;
    font-size: 20px;
}
.tray {
    display: flex;
    align-items: center;
    gap: 14px;
    margin-left: 26px;
}
.tray svg {
    fill: none;
    stroke: #fff;
    stroke-width: 1.5;
}
.lang {
    font-size: 17px;
}
.clock {
    width: 110px;
    margin: 0 19px 0 12px;
    flex-direction: column;
    font-size: 17px;
    line-height: 28px;
}
.notes {
    margin-right: 28px;
}
```
